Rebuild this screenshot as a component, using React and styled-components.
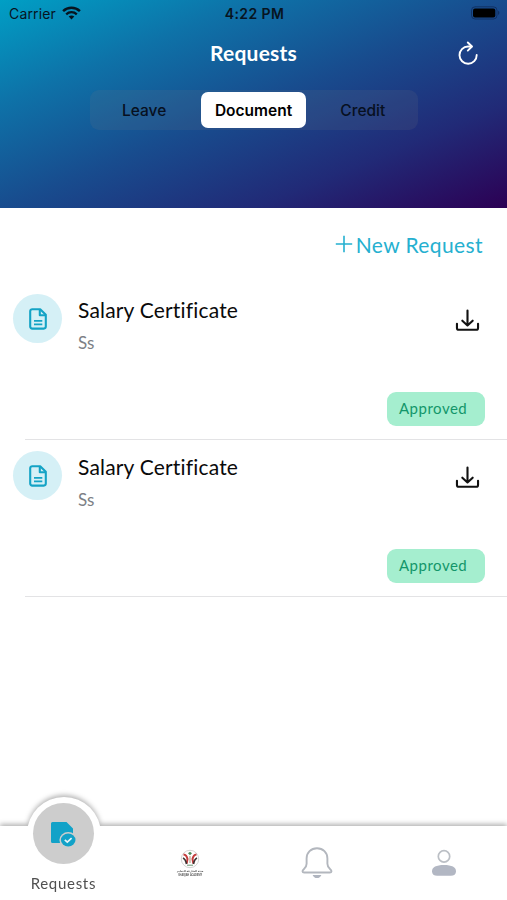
import React from "react";
import styled, { createGlobalStyle } from "styled-components";

const GlobalStyle = createGlobalStyle`
  * {
    box-sizing: border-box;
  }
  body {
    margin: 0;
    background-color: white;
  }
`;

const Screen = styled.div`
  width: 100%;
  height: 900px;
  display: flex;
  flex-direction: column;
  overflow: hidden;
  font-family: Lato, "Open Sans", sans-serif;
  color: #111;
`;

const Header = styled.header`
  height: 208px;
  background: linear-gradient(
    to bottom right,
    #009fc5 0%,
    #0e72a8 25%,
    #184c8e 50%,
    #212a77 75%,
    #2c0054 100%
  );
`;

const StatusBar = styled.div`
  height: 28px;
  padding: 0 7px 2px 9px;
  display: grid;
  grid-template-columns: 1fr auto 1fr;
  align-items: center;
  font-family: Inter, sans-serif;
  color: #07141f;
`;

const Carrier = styled.div`
  display: flex;
  align-items: center;
  gap: 6px;
  font-size: 14px;
  letter-spacing: 0.15px;
`;

const Time = styled.div`
  font-size: 14px;
  font-weight: 600;
  letter-spacing: 0.4px;
`;

const Battery = styled.svg`
  justify-self: end;
`;

const TitleBar = styled.div`
  height: 50px;
  padding: 0 28px;
  display: grid;
  grid-template-columns: 1fr auto 1fr;
  align-items: center;
`;

const Title = styled.h1`
  grid-column: 2;
  margin: 0 0 1px;
  font-size: 21px;
  font-weight: 700;
  line-height: 26px;
  letter-spacing: 0.2px;
  color: white;
`;

const IconButton = styled.button`
  justify-self: end;
  display: flex;
  padding: 0;
  border: none;
  background: none;
  color: ${(props) => props.$color || "#111"};
`;

const Segments = styled.div`
  width: 328px;
  height: 40px;
  margin: 12px auto 0;
  padding: 2px 0;
  display: flex;
  border-radius: 9px;
  background-color: rgba(118, 118, 128, 0.14);
`;

const Segment = styled.button`
  flex: 1 1 0;
  margin: 0 2.5px;
  padding: 0;
  border: none;
  border-radius: 7px;
  font-family: Inter, sans-serif;
  font-size: 15.5px;
  font-weight: ${(props) => (props.$active ? 600 : 500)};
  color: ${(props) => (props.$active ? "#000" : "#07101f")};
  background-color: ${(props) => (props.$active ? "white" : "transparent")};
`;

const Content = styled.main`
  flex: 1;
`;

const NewRequest = styled.button`
  height: 74px;
  margin-left: auto;
  padding: 0 24px 2px 0;
  display: flex;
  align-items: center;
  gap: 3px;
  border: none;
  background: none;
  font-family: inherit;
  font-size: 21px;
  letter-spacing: 0.4px;
  color: #25b0d0;
`;

const Row = styled.article`
  height: 157px;
  padding: 12px 0 0 13px;
  display: flex;
`;

const DocBadge = styled.div`
  width: 49px;
  height: 49px;
  display: flex;
  align-items: center;
  justify-content: center;
  border-radius: 50%;
  background-color: #d5f0f6;
`;

const RowText = styled.div`
  flex: 1;
  padding: 2px 0 0 16px;
`;

const RowTitle = styled.h2`
  margin: 0;
  font-size: 21px;
  font-weight: 400;
  line-height: 28px;
  letter-spacing: 0.18px;
  color: #0a0a0a;
`;

const RowNote = styled.p`
  margin: 8px 0 0;
  font-size: 17px;
  line-height: 22px;
  color: #7c7f85;
`;

const RowActions = styled.div`
  padding-right: 22px;
  display: flex;
  flex-direction: column;
  align-items: flex-end;
`;

const DownloadButton = styled(IconButton)`
  align-self: flex-end;
  margin: 15px 5px 0 0;
`;

const Status = styled.span`
  width: 98px;
  height: 34px;
  margin-top: 60px;
  padding: 0 0 2px 12px;
  display: flex;
  align-items: center;
  border-radius: 9px;
  font-size: 15px;
  letter-spacing: 0.5px;
  color: #13966a;
  background-color: #a5eecf;
`;

const Divider = styled.hr`
  height: 1px;
  margin: 0 0 -1px 25px;
  border: none;
  background-color: #e3e3e5;
`;

const TabBar = styled.nav`
  position: relative;
  height: 74px;
  display: grid;
  grid-template-columns: repeat(4, 1fr);
  background-color: white;
  filter: drop-shadow(0 -2px 2.5px rgba(0, 0, 0, 0.3));
`;

/* raised circle behind the active tab */
const Bump = styled.div`
  position: absolute;
  top: -29px;
  left: 27px;
  width: 74px;
  height: 74px;
  border-radius: 50%;
  background-color: white;
`;

const Tab = styled.button`
  position: relative;
  padding: 0;
  display: flex;
  flex-direction: column;
  align-items: center;
  justify-content: center;
  border: none;
  background: none;
  font-family: inherit;
`;

const ActiveTab = styled(Tab)`
  justify-content: flex-start;
`;

const ActiveCircle = styled.span`
  width: 61px;
  height: 61px;
  margin-top: -23px;
  display: flex;
  align-items: center;
  justify-content: center;
  border-radius: 50%;
  background-color: #cdcdcd;
`;

const TabLabel = styled.span`
  margin-top: 10px;
  font-size: 15px;
  line-height: 18px;
  letter-spacing: 0.7px;
  color: #505050;
`;

const EmblemText = styled.span`
  font-family: "Noto Sans", "DejaVu Sans", sans-serif;
  font-size: ${(props) => props.$size}px;
  font-weight: 700;
  line-height: 4px;
  white-space: nowrap;
  color: #5e5e5e;
`;

const WifiIcon = () => (
  <svg width="19" height="14" viewBox="0 0 19 14" fill="none" stroke="#07141f">
    <path d="M1.1 5.2C5.8.7 13.2.7 17.9 5.2" strokeWidth="2.5" />
    <path d="M4.2 8.3c3-2.8 7.6-2.8 10.6 0" strokeWidth="2.3" />
    <path d="M9.5 13.4 6.7 10.6c1.6-1.5 4-1.5 5.6 0z" fill="#07141f" stroke="none" />
  </svg>
);

const BatteryIcon = () => (
  <Battery width="30" height="14" viewBox="0 0 30 14">
    <rect x="1.5" y=".8" width="25.5" height="12.2" rx="3.6" fill="none" stroke="#0b1d45" strokeOpacity=".55" />
    <rect x="3" y="2.4" width="22.3" height="9" rx="2" fill="#000" />
    <path d="M28.2 4.8c1.6.7 1.6 3.5 0 4.2z" fill="#0b1d45" fillOpacity=".65" />
  </Battery>
);

const RefreshIcon = () => (
  <svg width="22" height="24" viewBox="0 0 22 24" fill="none" stroke="currentColor" strokeWidth="1.9" strokeLinecap="round" strokeLinejoin="round">
    <path d="M14.4 5.5H11A8.6 8.6 0 1 0 19.7 14" />
    <path d="M10.8 1.5l4.2 4-4.2 4.1" />
  </svg>
);

const PlusIcon = () => (
  <svg width="18" height="18" viewBox="0 0 18 18" stroke="currentColor" strokeWidth="1.6">
    <path d="M9 .8v16.4M.8 9h16.4" />
  </svg>
);

const DocIcon = () => (
  <svg width="18" height="22" viewBox="0 0 18 22" fill="none" stroke="#14a3c5" strokeWidth="2.1" strokeLinejoin="round">
    <path d="M3.2 1.2h8l5.6 5.6v11.8a2 2 0 0 1-2 2H3.2a2 2 0 0 1-2-2V3.2a2 2 0 0 1 2-2z" />
    <path d="M10.8 1.5v5.7h5.7" />
    <path d="M5 12.9h8.3M5 16.3h8.3" strokeWidth="1.8" />
  </svg>
);

const DownloadIcon = () => (
  <svg width="25" height="23" viewBox="0 0 26 24" fill="none" stroke="currentColor" strokeWidth="2.2" strokeLinecap="round" strokeLinejoin="round">
    <path d="M13 1.5V17M7.6 12.2l5.4 5 5.4-5" />
    <path d="M2 15.5v4.2a2 2 0 0 0 2 2h18a2 2 0 0 0 2-2v-4.2" />
  </svg>
);

const RequestDocIcon = () => (
  <svg width="26" height="26" viewBox="0 0 26 26">
    <path d="M2.5 1h14L23 7.5V22H2.5A1.5 1.5 0 0 1 1 20.5v-18A1.5 1.5 0 0 1 2.5 1z" fill="#12a2c8" />
    <ellipse cx="18.2" cy="19" rx="8.8" ry="7.9" fill="#cdcdcd" />
    <ellipse cx="18.2" cy="19" rx="7.3" ry="6.4" fill="#12a2c8" />
    <path d="M14.8 18.9l2.5 2.3 4.3-4" fill="none" stroke="#e6f4f8" strokeWidth="1.7" />
  </svg>
);

const EmblemIcon = () => (
  <svg width="20" height="20" viewBox="0 0 20 20" fill="none">
    <circle cx="10" cy="10" r="8.7" stroke="#c9c9c9" strokeWidth=".8" />
    <path d="M3.5 5.5c2 .2 3.5 2 4 4.5l-.8 4.5" stroke="#c33c3c" strokeWidth="2" />
    <path d="M16.5 5.5c-2 .2-3.5 2-4 4.5l.8 4.5" stroke="#c33c3c" strokeWidth="2" />
    <path d="M3 9c1.8.8 2.8 2.5 3.5 6M17 9c-1.8.8-2.8 2.5-3.5 6" stroke="#3b3434" strokeWidth="1.6" />
    <path d="M8 4.2l2-1.5 2 1.5-2 2z" fill="#4a8b5a" />
    <path d="M10 7v7" stroke="#c8b9a8" strokeWidth="1.6" />
    <path d="M7 16.2h6" stroke="#669672" strokeWidth="1" />
  </svg>
);

const BellIcon = () => (
  <svg width="32" height="32" viewBox="0 0 32 32">
    <path
      d="M16 1.2c-6 0-10.4 4.5-10.4 10.2v5.4c0 2.2-.8 3.8-2.8 5.4-1.8 1.5-1.7 3.3.4 3.3h25.6c2.1 0 2.2-1.8.4-3.3-2-1.6-2.8-3.2-2.8-5.4v-5.4C26.4 5.7 22 1.2 16 1.2z"
      fill="none"
      stroke="#b3b7be"
      strokeWidth="1.9"
    />
    <path d="M11.6 28h8.8c-.8 2-2.3 3.1-4.4 3.1s-3.6-1.1-4.4-3.1z" fill="#b0b5bf" />
  </svg>
);

const UserIcon = () => (
  <svg width="26" height="28" viewBox="0 0 26 28">
    <circle cx="13" cy="7.4" r="5.7" fill="none" stroke="#bbbfc5" strokeWidth="1.7" />
    <path d="M1 22.2c0-4 4.2-6.2 12-6.2s12 2.2 12 6.2c0 3.2-2 4.6-5.2 4.6H6.2C3 26.8 1 25.4 1 22.2z" fill="#b2b7c3" />
  </svg>
);

const tabs = ["Leave", "Document", "Credit"];

const requests = [
  { id: 1, title: "Salary Certificate", note: "Ss", status: "Approved" },
  { id: 2, title: "Salary Certificate", note: "Ss", status: "Approved" },
];

const App = () => {
  return (
    <Screen>
      <GlobalStyle />
      <Header>
        <StatusBar>
          <Carrier>
            Carrier <WifiIcon />
          </Carrier>
          <Time>4:22 PM</Time>
          <BatteryIcon />
        </StatusBar>
        <TitleBar>
          <Title>Requests</Title>
          <IconButton $color="white" aria-label="Refresh">
            <RefreshIcon />
          </IconButton>
        </TitleBar>
        <Segments>
          {tabs.map((tab) => (
            <Segment key={tab} $active={tab === "Document"}>
              {tab}
            </Segment>
          ))}
        </Segments>
      </Header>
      <Content>
        <NewRequest>
          <PlusIcon />
          New Request
        </NewRequest>
        {requests.map((request) => (
          <React.Fragment key={request.id}>
            <Row>
              <DocBadge>
                <DocIcon />
              </DocBadge>
              <RowText>
                <RowTitle>{request.title}</RowTitle>
                <RowNote>{request.note}</RowNote>
              </RowText>
              <RowActions>
                <DownloadButton aria-label="Download">
                  <DownloadIcon />
                </DownloadButton>
                <Status>{request.status}</Status>
              </RowActions>
            </Row>
            <Divider />
          </React.Fragment>
        ))}
      </Content>
      <TabBar>
        <Bump />
        <ActiveTab>
          <ActiveCircle>
            <RequestDocIcon />
          </ActiveCircle>
          <TabLabel>Requests</TabLabel>
        </ActiveTab>
        <Tab>
          <EmblemIcon />
          <EmblemText $size={2.7}>هيئة الشارقة للتعليم</EmblemText>
          <EmblemText $size={2.5}>SHARJAH ACADEMY</EmblemText>
        </Tab>
        <Tab>
          <BellIcon />
        </Tab>
        <Tab>
          <UserIcon />
        </Tab>
      </TabBar>
    </Screen>
  );
};

export default App;
